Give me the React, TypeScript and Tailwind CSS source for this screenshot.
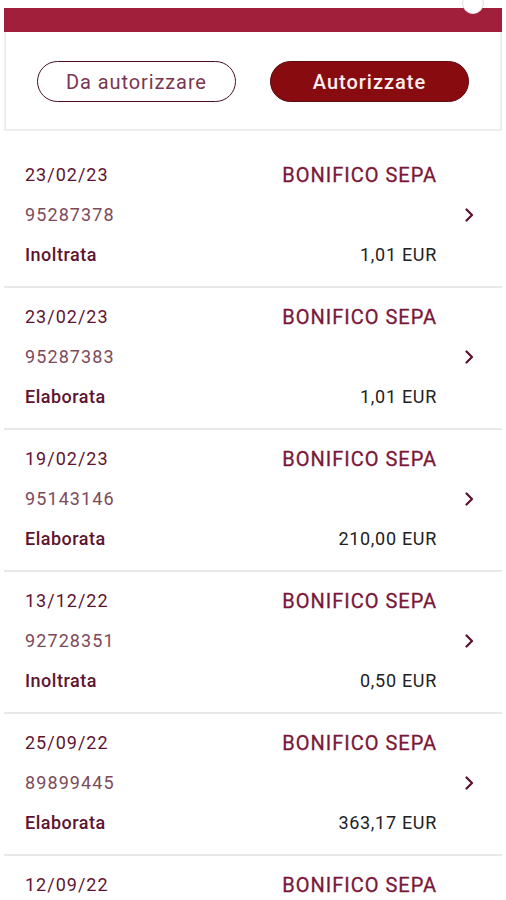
interface Transfer {
  date: string
  id: string
  status: string
  amount: string
}

const transfers: Transfer[] = [
  { date: "23/02/23", id: "95287378", status: "Inoltrata", amount: "1,01 EUR" },
  { date: "23/02/23", id: "95287383", status: "Elaborata", amount: "1,01 EUR" },
  { date: "19/02/23", id: "95143146", status: "Elaborata", amount: "210,00 EUR" },
  { date: "13/12/22", id: "92728351", status: "Inoltrata", amount: "0,50 EUR" },
  { date: "25/09/22", id: "89899445", status: "Elaborata", amount: "363,17 EUR" },
  // last row runs off the bottom of the screen
  { date: "12/09/22", id: "", status: "", amount: "" }
]

export default function App() {
  return (
    <div className="relative h-[900px] w-[506px] overflow-hidden bg-white font-['Roboto',sans-serif]">
      <Header />
      <div className="mt-[15px] flex flex-col">
        {transfers.map((t, i) => (
          <TransferRow key={i} {...t} />
        ))}
      </div>
    </div>
  )
}

function Header() {
  return (
    <div className="relative mx-[4px] mt-[8px]">
      <div className="h-[24px] bg-[#a21f3b]" />
      {/* little knob peeking from the top edge */}
      <div className="absolute right-[18px] -top-[16px] h-[22px] w-[22px] rounded-full border border-[#e4d8dc] bg-white" />
      <div className="flex gap-[34px] border-x-2 border-b-2 border-[#ededed] px-[31px] pb-[27px] pt-[29px]">
        <button className="h-[41px] flex-1 rounded-full border-[1.5px] border-[#4a0f1e] bg-white text-[20px] tracking-[0.9px] text-[#7a3550]">
          Da autorizzare
        </button>
        <button className="h-[41px] flex-1 rounded-full border-[1.5px] border-[#5a0a10] bg-[#880b10] text-[20px] font-medium tracking-[1px] text-[#fbeeee]">
          Autorizzate
        </button>
      </div>
    </div>
  )
}

function Chevron() {
  return (
    <svg width="9" height="14" viewBox="0 0 9 14" fill="none">
      <path d="M1.5 1.5 7 7l-5.5 5.5" stroke="#5a1030" strokeWidth="2.2" strokeLinecap="round" strokeLinejoin="round" />
    </svg>
  )
}

function TransferRow({ date, id, status, amount }: Transfer) {
  return (
    <div className="flex flex-col">
      <div className="flex items-center pl-[25px] pr-[32px] pt-[19px] pb-[21px]">
        <div className="flex flex-1 flex-col gap-[20px] text-[18px] leading-[20px]">
          <div className="flex h-[20px] justify-between">
            <span className="tracking-[1px] text-[#5e1430]">{date}</span>
            <span className="text-[20px] tracking-[1px] text-[#7a1838] [-webkit-text-stroke:0.3px_#7a1838]">BONIFICO SEPA</span>
          </div>
          <div className="h-[20px] tracking-[1.1px] text-[#7c4a5a]">{id}</div>
          <div className="flex h-[20px] justify-between">
            <span className="font-medium tracking-[0.5px] text-[#5e1430]">{status}</span>
            <span className="tracking-[0.7px] text-[#222]">{amount}</span>
          </div>
        </div>
        <div className="ml-[28px] flex w-[9px] justify-center">
          <Chevron />
        </div>
      </div>
      <div className="mx-[4px] h-[2px] bg-[#e8e8e8]" />
    </div>
  )
}
